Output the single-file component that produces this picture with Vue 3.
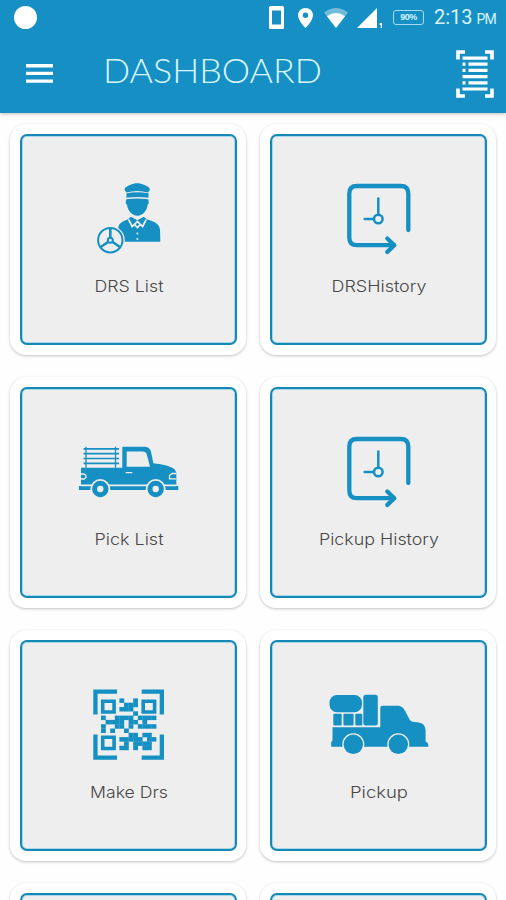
<script setup>
const cards = [
  { label: 'DRS List', icon: 'driver', width: 69 },
  { label: 'DRSHistory', icon: 'history', width: 95 },
  { label: 'Pick List', icon: 'truck', width: 69 },
  { label: 'Pickup History', icon: 'history', width: 120 },
  { label: 'Make Drs', icon: 'qr', width: 78 },
  { label: 'Pickup', icon: 'pickup', width: 58 },
  { label: '', icon: '', width: 0 },
  { label: '', icon: '', width: 0 },
]

// centre modules of the qr glyph
const qrRows = [
  '....#..#....',
  '.....###....',
  '....###.....',
  '.......#....',
  '#..####.####',
  '.####.##.#..',
  '#..##.#.####',
  '#.#..#......',
  '......##.##.',
  '....#####.##',
  '.....#.####.',
  '....##.#.##.',
]

const qrCells = qrRows.flatMap((row, y) =>
  [...row].flatMap((c, x) => (c === '#' ? [{ x: 22 + x * 4.6, y: 12.4 + y * 4.3 }] : [])),
)
</script>

<template>
  <div class="screen">
    <header class="app-header">
      <div class="status-bar">
        <span class="dot" />
        <div class="status-icons">
          <svg class="phone" width="15" height="23" viewBox="0 0 15 23">
            <path fill-rule="evenodd" d="M1.500 0h12q1.500 0 1.500 1.500v20q0 1.500-1.500 1.500h-12Q0 23 0 21.500v-20Q0 0 1.500 0zM3 4.500v14h9v-14z" />
          </svg>
          <svg class="pin" width="15" height="20" viewBox="0 0 15 20">
            <path fill-rule="evenodd" d="M7.500 0C3.300 0 0 3.200 0 7.200 0 12.500 7.500 20 7.500 20S15 12.500 15 7.200C15 3.200 11.700 0 7.500 0zm0 4.600a2.700 2.700 0 1 1 0 5.400 2.700 2.700 0 0 1 0-5.400z" />
          </svg>
          <svg class="wifi" width="24" height="20" viewBox="0 0 24 20">
            <path opacity=".4" d="M0 4.500Q12-4.500 24 4.500L12 20z" />
            <path d="M3 8.300Q12 1.800 21 8.300L12 20z" />
          </svg>
          <svg class="signal" width="26" height="20" viewBox="0 0 26 20">
            <path d="M0 20L20 0v20zM22.700 15h2.300v5h-1.300v-3h-1z" />
          </svg>
          <span class="battery">90%</span>
          <span class="time">2:13<small>PM</small></span>
        </div>
      </div>
      <div class="toolbar">
        <svg class="menu" width="27" height="19" viewBox="0 0 27 19">
          <path d="M0 0h27v3.400H0zM0 7.700h27v3.400H0zM0 15.400h27v3.400H0z" />
        </svg>
        <h1>
          <svg width="230" height="44" viewBox="0 0 230 44">
            <text x="2" y="31" textLength="219" lengthAdjust="spacingAndGlyphs">DASHBOARD</text>
          </svg>
        </h1>
        <svg class="scan" width="38" height="48" viewBox="0 0 38 48">
          <path class="corner" d="M2 9.500V2h7M29 2h7v7.500M2 38.500V46h7M29 46h7v-7.500" />
          <path d="M6.500 6.500h25v3.200h-25zM6.500 12.500h3v3.200h-3zM12.500 12.500h19v3.200h-19zM6.500 18.700h3v3.200h-3zM12.500 18.700h19v3.200h-19zM6.500 25h25v3.200h-25zM6.500 31.200h3v3.200h-3zM12.500 31.200h19v3.200h-19zM6.500 37.400h25v3.200h-25z" />
        </svg>
      </div>
    </header>

    <main class="grid">
      <section v-for="(card, i) in cards" :key="i" class="card">
        <div class="tile">
          <svg class="icon" width="100" height="80" viewBox="0 0 100 80">
            <g v-if="card.icon === 'driver'">
              <path d="M45.700 10.200C45 8 47.500 6.500 51 5c5-2.300 9.500-2.300 14.500 0 3.500 1.500 6 3 5.200 5.200l-1.700 2.300q-11-3-21.500 0z" />
              <path d="M47.500 13.300q11-2.300 22 0v4.500q-11-1.500-22 0z" />
              <path d="M47.300 19.300q11-1.700 22 0l.5 4-1.200 1.500c-.6 6-4.800 10.900-10.200 10.900S48.700 30.800 48 24.800l-1.400-1.500z" />
              <path d="M39.300 61.800V48c.5-5 4-6.500 9.200-8.500l3.500-2.700 6.400 3.400 6.400-3.400 3.500 2.700c7.500 2 12 4.500 12.700 10l.3 12.300z" />
              <path class="cut" d="M49.500 39.300l3.700 7.200 5.200-5 5.200 5 3.700-7.200M54.800 43.800l3.600 3.700 3.600-3.700" />
              <circle class="hole" cx="58.400" cy="53.500" r="1" />
              <circle class="hole" cx="58.400" cy="59" r="1" />
              <circle class="hole" cx="31.300" cy="60.200" r="14.500" />
              <circle class="line thin" cx="31.300" cy="60.200" r="12.200" />
              <circle class="line thin" cx="31.300" cy="60.200" r="2.500" />
              <path class="line wheel" d="M31.300 57.500V48.500M29 62l-7.300 5M33.600 62l7.300 5" />
            </g>
            <g v-else-if="card.icon === 'history'">
              <path class="line thick" d="M79.300 50V13.500q0-7.500-7.500-7.500h-44q-7.500 0-7.500 7.500v44q0 7.700 7.500 7.700h37" />
              <path class="line thick" d="M58.300 58.500l7 6.700-7 6.700" />
              <path class="line hand" d="M49.300 18.500v15.800M35.700 39h8.600" />
              <circle class="line hand" cx="49.300" cy="39" r="4.300" />
            </g>
            <g v-else-if="card.icon === 'truck'">
              <path class="line rail" d="M4.500 15.800h35.500M4.500 20.600h35.500M4.500 25.500h35.500M4.500 30.300h35.500" />
              <path class="line post" d="M7 13.800v21M36.500 13.800v21" />
              <path fill-rule="evenodd" d="M2 34.700h41.300v-21H64c5.500 0 7 1.500 8 5l2.300 11.600c8.500 1 17.500 2.500 21.700 6.400l1.300 3V52H2zM47.700 18.500v15.300H71L67.700 21q-.8-2.500-3.500-2.500z" />
              <path d="M0 53h99.300v4H0z" />
              <path class="cut" d="M2 52.400h95" />
              <path class="cut fine" d="M46.700 39.700h6.600M2 41h3l2 1.500v2L5 46H2M97 40.500h-4l-2.500 2v3.300H97" />
              <circle class="hole" cx="21.300" cy="56" r="10" />
              <circle class="hole" cx="76.700" cy="56" r="10" />
              <circle class="line tyre" cx="21.300" cy="56" r="5.700" />
              <circle class="line tyre" cx="76.700" cy="56" r="5.700" />
            </g>
            <g v-else-if="card.icon === 'qr'">
              <path d="M14.300 3.500H38v4.300H18.600V28.500h-4.300zM62.700 3.500H85v25h-4.300V7.800h-18zM14.300 48.500h4.300v21H38v4.300H14.300zM80.700 48.500H85v25.300H62.700V69.500h18z" />
              <path class="finder" d="M23.700 15.300h11.400v10.700H23.700zM64.200 15.300h11.400v10.700H64.200zM23.700 51.300h11.400v11.200H23.700z" />
              <rect v-for="(cell, n) in qrCells" :key="n" :x="cell.x" :y="cell.y" width="4.800" height="4.500" />
            </g>
            <g v-else-if="card.icon === 'pickup'">
              <rect x="0.500" y="9" width="32.500" height="17.300" rx="7.500" />
              <rect x="34.300" y="8.700" width="14.500" height="30.700" rx="2.500" />
              <rect x="4.300" y="27.700" width="8.400" height="11.700" rx="1" />
              <rect x="14.400" y="27.700" width="10.200" height="11.700" rx="1" />
              <rect x="26.300" y="27.700" width="7" height="11.700" rx="1" />
              <path d="M3.500 41.200h47.800V22q0-2.300 2.300-2.300h15c4 0 6 2.300 7.500 5.300l4.500 8.500q1 1.800 3 2.200l6 .8c5 .8 7 4 7 8.500v10.500q2.700 1 2.700 3.500v1.700H2.200V56l1.300-1.500z" />
              <circle class="hole" cx="24.300" cy="58.300" r="11" />
              <circle class="hole" cx="69.300" cy="58.300" r="11" />
              <circle cx="24.300" cy="58.300" r="9.700" />
              <circle cx="69.300" cy="58.300" r="9.700" />
            </g>
          </svg>
          <svg v-if="card.label" class="label" width="140" height="30" viewBox="0 0 140 30">
            <text :x="70 - card.width / 2" y="20" :textLength="card.width" lengthAdjust="spacingAndGlyphs">{{ card.label }}</text>
          </svg>
        </div>
      </section>
    </main>
  </div>
</template>

<style>
body {
  margin: 0;
}
</style>

<style scoped>
.screen {
  width: 506px;
  height: 900px;
  overflow: hidden;
  background: #fefefe;
  font-family: Lato, sans-serif;
}
.app-header {
  position: relative;
  height: 113px;
  background: #158fc4;
  box-shadow: 0 1px 4px rgba(60, 30, 30, 0.3);
  color: #fff;
}
.app-header svg {
  display: block;
  fill: #fff;
}
.status-bar {
  display: flex;
  justify-content: space-between;
  height: 35px;
  padding: 0 10px 0 14px;
  align-items: center;
}
.dot {
  width: 23px;
  height: 23px;
  border-radius: 50%;
  background: #fff;
}
.status-icons {
  display: flex;
  align-items: center;
  color: #d9f3ff;
}
.pin {
  margin-left: 14px;
}
.wifi {
  margin-left: 11px;
}
.signal {
  margin-left: 9px;
}
.battery {
  box-sizing: border-box;
  width: 31px;
  height: 15px;
  margin-left: 10px;
  border: 1px solid #a5dbf2;
  border-radius: 3px;
  font: bold 9px/13px "Liberation Sans", sans-serif;
  letter-spacing: -0.5px;
  text-align: center;
}
.time {
  width: 62px;
  margin-left: 10px;
  font: 20px/24px Roboto, sans-serif;
  white-space: nowrap;
}
.time small {
  margin-left: 4px;
  font-size: 14px;
  letter-spacing: -1px;
}
.toolbar {
  display: flex;
  align-items: center;
  height: 77px;
  padding: 0 12px 0 26px;
}
.toolbar h1 {
  flex: 1;
  margin: 0 0 0 48px;
}
.toolbar h1 text {
  fill: #d9f6ff;
  font-family: Lato, sans-serif;
  font-size: 32.5px;
  font-weight: 300;
}
.corner {
  fill: none;
  stroke: #fff;
  stroke-width: 3.6;
}
.grid {
  display: grid;
  grid-template-columns: 236px 236px;
  gap: 22px 14px;
  padding: 11px 10px 0;
}
.card {
  box-sizing: border-box;
  height: 231px;
  padding: 10px 9px 10px 10px;
  border-radius: 16px;
  background: #fff;
  box-shadow: 0 1px 3px rgba(0, 0, 0, 0.24);
}
.tile {
  display: flex;
  flex-direction: column;
  align-items: center;
  box-sizing: border-box;
  height: 211px;
  padding-top: 44px;
  border: 2px solid #1688b5;
  border-radius: 7px;
  background: #eee;
  box-shadow: inset 0 0 0 1px #a6d8ea;
}
.icon {
  display: block;
  flex: none;
  fill: #168fc3;
}
.label {
  flex: none;
  margin-top: 12px;
}
.label text {
  fill: #484848;
  font-family: Inter, sans-serif;
  font-size: 16.5px;
  font-weight: 300;
}
.hole {
  fill: #eee;
}
.cut {
  fill: none;
  stroke: #eee;
  stroke-width: 1.7;
}
.fine {
  stroke-width: 1.3;
}
.line {
  fill: none;
  stroke: #168fc3;
}
.thin {
  stroke-width: 2;
}
.wheel {
  stroke-width: 2.6;
}
.thick {
  stroke-width: 4.3;
  stroke-linecap: round;
  stroke-linejoin: round;
}
.hand {
  stroke-width: 2.5;
  stroke-linecap: round;
}
.rail {
  stroke-width: 1.7;
}
.post {
  stroke-width: 1.3;
}
.tyre {
  stroke-width: 5;
}
.finder {
  fill: none;
  stroke: #168fc3;
  stroke-width: 3.6;
}
</style>
